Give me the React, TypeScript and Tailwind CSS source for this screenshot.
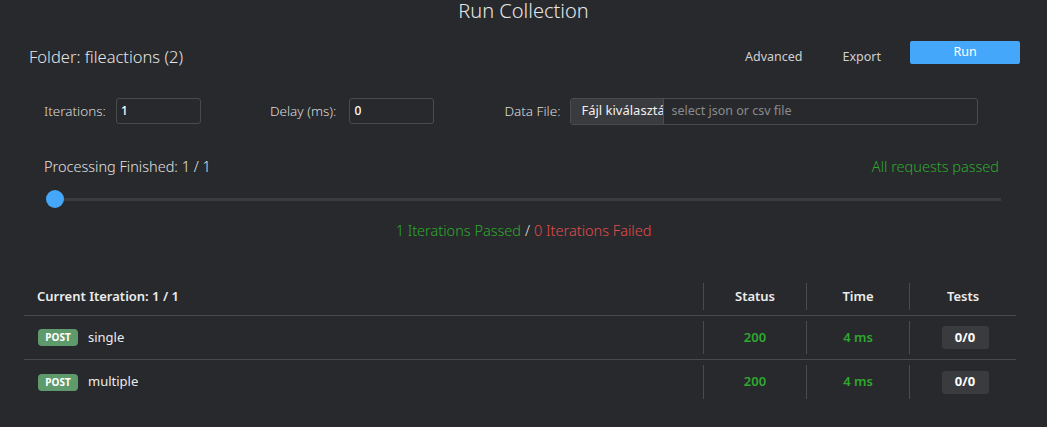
import React from "react";

const rows = [
  { method: "POST", name: "single", status: "200", time: "4 ms", tests: "0/0" },
  { method: "POST", name: "multiple", status: "200", time: "4 ms", tests: "0/0" },
];

export default function App() {
  return (
    <div
      className="w-[1047px] h-[427px] overflow-hidden bg-[#28292c] text-[#dcdcdc]"
      style={{ fontFamily: '"Noto Sans", "Open Sans", sans-serif' }}
    >
      {/* Title */}
      <div className="h-[24px] flex items-start justify-center">
        <h1 className="text-[20px] leading-[22px] font-light text-[#e6e6e6]">Run Collection</h1>
      </div>

      {/* Folder / actions */}
      <div className="mt-[17px] h-[23px] flex items-start pl-[29px] pr-[27px]">
        <div className="mt-[4px] text-[16.5px] leading-[24px] font-light text-[#e4e4e4] flex-1">Folder: fileactions (2)</div>
        <button className="mt-[7px] leading-[18px] text-[12.5px] text-[#d0d0d0] mr-[40px]">Advanced</button>
        <button className="mt-[7px] leading-[18px] text-[12.5px] text-[#d0d0d0] mr-[29px]">Export</button>
        <button className="w-[110px] h-[23px] rounded-[2px] bg-[#45a7f9] text-white text-[12.5px]">Run</button>
      </div>

      {/* Inputs row */}
      <div className="mt-[34px] h-[26px] flex items-center pl-[44px] text-[13.5px] font-light text-[#dcdcdc]">
        <span>Iterations:</span>
        <div className="ml-[10px] w-[85px] h-[26px] rounded-[3px] border border-[#4a4b4e] flex items-center pl-[4px] text-[12px] font-medium text-white">1</div>
        <span className="ml-[69px]">Delay (ms):</span>
        <div className="ml-[13px] w-[85px] h-[26px] rounded-[3px] border border-[#4a4b4e] flex items-center pl-[4px] text-[12px] font-medium text-white">0</div>
        <span className="ml-[70px]">Data File:</span>
        <div className="ml-[10px] w-[408px] h-[27px] rounded-[3px] border border-[#4a4b4e] flex items-center overflow-hidden">
          <div className="w-[93px] shrink-0 h-full bg-[#3a3b3e] border-r border-[#4a4b4e] flex items-center pl-[10px] overflow-hidden whitespace-nowrap text-[13px] font-normal text-[#f0f0f0]">
            Fájl kiválasztása
          </div>
          <span className="ml-[7px] text-[12.5px] text-[#8a8b8d] font-normal whitespace-nowrap">select json or csv file</span>
        </div>
      </div>

      {/* Processing */}
      <div className="mt-[33px] h-[20px] flex items-center justify-between pl-[44px] pr-[48px] text-[14.5px] font-light">
        <span className="text-[#e0e0e0]">Processing Finished: 1 / 1</span>
        <span className="text-[#2ea82e]">All requests passed</span>
      </div>

      {/* Slider */}
      <div className="mt-[13px] h-[18px] ml-[46px] mr-[46px] relative flex items-center">
        <div className="w-full h-[3px] bg-[#3a3b3e]" />
        <div className="absolute left-0 top-0 w-[18px] h-[18px] rounded-full bg-[#45a7f9]" />
      </div>

      {/* Summary */}
      <div className="mt-[13px] h-[20px] flex items-center justify-center text-[14.5px] font-light">
        <span className="text-[#2ea82e]">1 Iterations Passed</span>
        <span className="text-[#e0e0e0] mx-[4px]">/</span>
        <span className="text-[#e24c4c]">0 Iterations Failed</span>
      </div>

      {/* Table */}
      <div className="mt-[37px] ml-[24px] w-[992px] text-[13px]">
        <div className="h-[38px] py-[5px] flex border-b border-[#4a4b4e] font-semibold text-[#ececec]">
          <div className="flex-1 flex items-center pl-[13px]">Current Iteration: 1 / 1</div>
          <div className="w-[103px] border-l border-[#4a4b4e] flex items-center justify-center">Status</div>
          <div className="w-[103px] border-l border-[#4a4b4e] flex items-center justify-center">Time</div>
          <div className="w-[107px] border-l border-[#4a4b4e] flex items-center justify-center">Tests</div>
        </div>
        {rows.map((r, i) => (
          <div
            key={r.name}
            className={`h-[44px] py-[5px] flex ${i === 0 ? "border-b border-[#4a4b4e]" : ""}`}
          >
            <div className="flex-1 flex items-center pl-[14px]">
              <span className="w-[40px] h-[17px] rounded-[4px] bg-[#5f9a6c] text-white text-[10px] font-bold flex items-center justify-center">
                {r.method}
              </span>
              <span className="ml-[10px] text-[13px] text-[#ececec]">{r.name}</span>
            </div>
            <div className="w-[103px] border-l border-[#4a4b4e] flex items-center justify-center text-[#2ea82e] font-semibold">
              {r.status}
            </div>
            <div className="w-[103px] border-l border-[#4a4b4e] flex items-center justify-center text-[#2ea82e] font-semibold">
              {r.time}
            </div>
            <div className="w-[107px] border-l border-[#4a4b4e] flex items-center justify-center pl-[4px]">
              <span className="w-[47px] h-[23px] rounded-[3px] bg-[#3a3b3e] text-white font-bold flex items-center justify-center">
                {r.tests}
              </span>
            </div>
          </div>
        ))}
      </div>
    </div>
  );
}
